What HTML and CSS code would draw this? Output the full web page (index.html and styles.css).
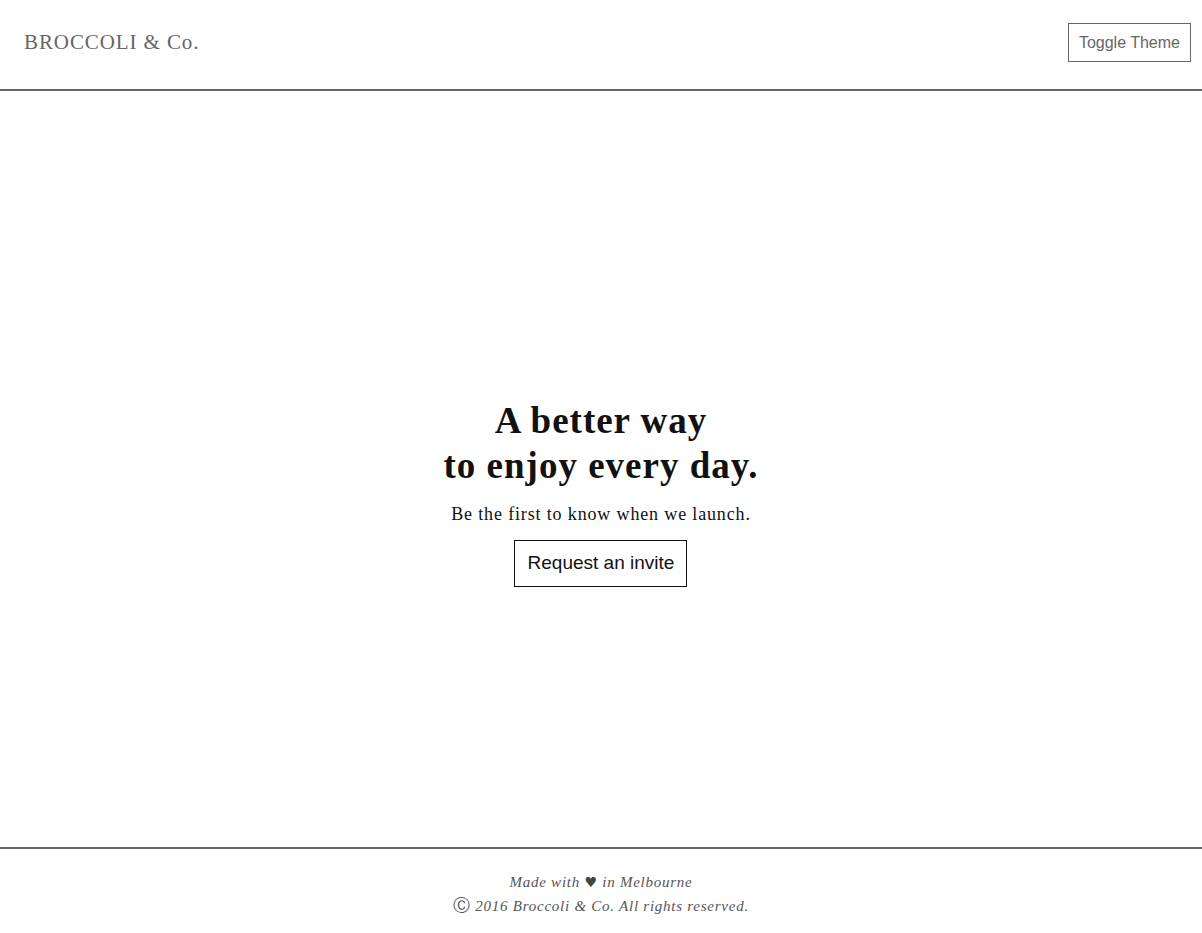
FILE: index.html
```html
<!DOCTYPE html>
<html lang="en">
<head>
<meta charset="utf-8">
<title>Broccoli &amp; Co.</title>
<link rel="stylesheet" href="styles.css">
</head>
<body>
<div class="page">
  <header class="header">
    <div class="logo">BROCCOLI &amp; Co.</div>
    <button class="toggle">Toggle Theme</button>
  </header>
  <main class="main">
    <section class="hero">
      <h1 class="title">A better way<br>to enjoy every day.</h1>
      <p class="subtitle">Be the first to know when we launch.</p>
      <button class="invite">Request an invite</button>
    </section>
  </main>
  <footer class="footer">
    <p class="foot-line">Made with <span class="heart">&#9829;</span> in Melbourne</p>
    <p class="foot-line"><span class="copy">&#9400;</span> 2016 Broccoli &amp; Co. All rights reserved.</p>
  </footer>
</div>
</body>
</html>
```
FILE: styles.css
```css
html, body {
  margin: 0;
  padding: 0;
  background: #fff;
}
body {
  font-family: "Liberation Serif", "Times New Roman", serif;
  color: #111;
}
.page {
  min-height: 100vh;
  display: flex;
  flex-direction: column;
}
.header {
  box-sizing: border-box;
  height: 91px;
  border-bottom: 2px solid #666;
  display: flex;
  align-items: center;
  justify-content: space-between;
  padding: 0 11px 0 24px;
}
.logo {
  font-size: 21px;
  color: #666;
  letter-spacing: 0.9px;
  margin-top: -4px;
}
.toggle {
  font-family: "Liberation Sans", Arial, sans-serif;
  font-size: 16px;
  color: #666;
  background: #fff;
  border: 1px solid #666;
  padding: 0 10px;
  height: 39px;
  margin-top: -4px;
  cursor: pointer;
}
.main {
  flex: 1;
  display: flex;
  align-items: center;
  justify-content: center;
}
.hero {
  text-align: center;
  margin-top: 46px;
}
.title {
  font-size: 37px;
  line-height: 45px;
  font-weight: bold;
  letter-spacing: 1px;
  margin: 0;
  color: #111;
}
.subtitle {
  font-size: 18px;
  line-height: 22px;
  letter-spacing: 0.85px;
  margin: 15px 0 15px;
}
.invite {
  font-family: "Liberation Sans", Arial, sans-serif;
  font-size: 19px;
  color: #111;
  background: #fff;
  border: 1px solid #111;
  width: 173px;
  height: 47px;
  padding: 0;
  cursor: pointer;
}
.footer {
  border-top: 2px solid #666;
  height: 86px;
  box-sizing: border-box;
  padding-top: 22px;
  text-align: center;
}
.foot-line {
  margin: 0;
  font-style: italic;
  font-size: 15px;
  line-height: 23px;
  letter-spacing: 0.75px;
  color: #555;
}
.heart {
  font-style: normal;
  font-family: "DejaVu Sans", sans-serif;
  font-size: 14px;
  color: #444;
}
.copy {
  font-style: normal;
  font-size: 17px;
}
```
